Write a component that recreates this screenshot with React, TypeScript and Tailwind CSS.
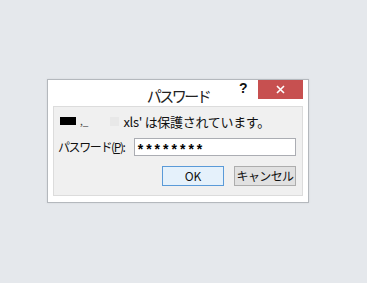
import React from "react";

export default function App() {
  const jp = { fontFamily: '"Noto Sans CJK JP", "Noto Sans", sans-serif' };
  return (
    <div className="w-[367px] h-[283px] bg-[#e5e8ec] pt-[79px] pl-[47px]" style={jp}>
      <div className="w-[262px] h-[124px] border border-[#b4b8bd] bg-white flex flex-col shadow-[0_0_2px_rgba(0,0,0,0.08)]">
        <div className="relative h-[26px] flex items-center justify-center">
          <span className="text-[15px] leading-none text-[#222] mt-[4px] tracking-[-2.5px]">パスワード</span>
          <span className="absolute left-[191px] top-[1px] text-[14px] font-bold text-[#111] leading-none" style={{ fontFamily: '"Liberation Sans", sans-serif' }}>?</span>
          <div className="absolute right-[5px] top-0 w-[45px] h-[19px] bg-[#c75050] flex items-center justify-center">
            <svg width="9" height="9" viewBox="0 0 9 9">
              <path d="M1 1 L8 8 M8 1 L1 8" stroke="#fff" strokeWidth="1.6" />
            </svg>
          </div>
        </div>
        <div className="mx-[5px] h-[90px] bg-[#f0f0f0] border border-[#dcdcdc] flex flex-col px-[6px] pt-[7px]">
          <div className="flex items-center h-[14px] text-[13px] text-[#111] leading-none whitespace-nowrap">
            <div className="w-[16px] h-[8px] bg-black" />
            <span className="ml-[4px] text-[10px] text-[#444]">,_</span>
            <div className="ml-[22px] w-[9px] h-[9px] bg-[#e8e8e8]" />
            <span className="ml-[4px] tracking-[-0.3px]">xls' は保護されています。</span>
          </div>
          <div className="flex items-center mt-[10px] h-[18px]">
            <span className="text-[12px] text-[#111] leading-none ml-[-2px] w-[77px] whitespace-nowrap tracking-[-1.4px]">
              パスワード(<span className="underline">P</span>):
            </span>
            <div className="w-[165px] h-[18px] bg-white border border-[#abadb3] flex items-center pl-[3px] text-[14px] font-bold tracking-[3px] text-black leading-none" style={{ fontFamily: '"Liberation Sans", sans-serif' }}>
              <span className="mt-[4px]">********</span>
            </div>
          </div>
          <div className="flex justify-end gap-[10px] mt-[10px]">
            <div className="w-[62px] h-[20px] border border-[#5a9ad8] bg-[#e5f1fb] flex items-center justify-center text-[12px] text-[#111] leading-none">OK</div>
            <div className="w-[62px] h-[20px] border border-[#adadad] bg-[#e1e1e1] flex items-center justify-center text-[12px] text-[#111] leading-none tracking-[-0.6px]">キャンセル</div>
          </div>
        </div>
      </div>
    </div>
  );
}
